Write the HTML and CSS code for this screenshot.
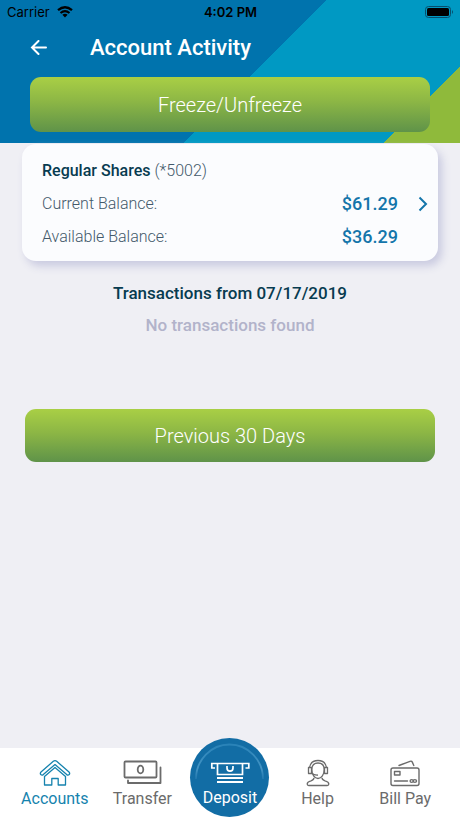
FILE: index.html
```html
<!DOCTYPE html>
<html lang="en">
<head>
<meta charset="utf-8">
<meta name="viewport" content="width=device-width, initial-scale=1">
<title>Account Activity</title>
<link rel="stylesheet" href="styles.css">
</head>
<body>
<header class="header">
  <div class="status">
    <span class="carrier">Carrier
      <svg width="16" height="12" viewBox="0 0 16 12" fill="none" stroke="#000" aria-hidden="true">
        <path d="M1 4.200Q8 -1.800 15 4.200" stroke-width="2.300"/>
        <path d="M3.500 7Q8 3.200 12.500 7" stroke-width="2.100"/>
        <path d="M5.400 8.800Q8 6.800 10.600 8.800L8 11.500Z" fill="#000" stroke="none"/>
      </svg>
    </span>
    <span class="time">4:02 PM</span>
    <svg class="battery" width="29" height="12" viewBox="0 0 29 12" aria-hidden="true">
      <rect x=".5" y=".5" width="25" height="11" rx="3" fill="none" stroke="#064e6c"/>
      <rect x="2" y="2" width="22" height="8" rx="1.500"/>
      <path d="M27 4q2 2 0 4z" fill="#064e6c"/>
    </svg>
  </div>
  <div class="titlebar">
    <a class="back" href="#" aria-label="Back">
      <svg width="18" height="16" viewBox="0 0 18 16" fill="none" stroke="#fff" stroke-width="2" stroke-linecap="round" aria-hidden="true"><path d="M16 7.500H2M8.500 1L2 7.500l6.500 6.500"/></svg>
    </a>
    <h1>Account Activity</h1>
  </div>
  <button class="action" type="button">Freeze/Unfreeze</button>
</header>
<main class="content">
  <a class="card" href="#">
    <span class="details">
      <span class="name"><strong>Regular Shares</strong> (*5002)</span>
      <span class="row"><span>Current Balance:</span><span class="amount">$61.29</span></span>
      <span class="row"><span>Available Balance:</span><span class="amount">$36.29</span></span>
    </span>
    <svg class="chevron" width="10" height="16" viewBox="0 0 10 16" fill="none" stroke="#1475aa" stroke-width="2" aria-hidden="true"><path d="M1.500 1.500L8 8l-6.500 6.500"/></svg>
  </a>
  <section class="transactions">
    <h2>Transactions from 07/17/2019</h2>
    <p>No transactions found</p>
  </section>
  <button class="action previous" type="button">Previous 30 Days</button>
</main>
<nav class="tabs" aria-label="Main">
  <a class="tab active" href="#">
    <svg width="32" height="28" viewBox="0 0 32 28" fill="none" stroke="currentColor" stroke-width="1.300" stroke-linejoin="round" aria-hidden="true">
      <path d="M14.300 2.300Q16 .9 17.700 2.300L30 13q1.200 1.300.2 2.500-1.100 1.100-2.500.1L16 5.600 4.300 15.600q-1.400 1-2.500-.1-1-1.200.2-2.500Z"/>
      <path d="M5.500 17.500V26h7.300v-6.500h6.400V26h7.300v-8.500L16 8.400Z"/>
    </svg>
    <span>Accounts</span>
  </a>
  <a class="tab" href="#">
    <svg width="40" height="28" viewBox="0 0 40 28" fill="none" stroke="currentColor" stroke-width="1.800" stroke-linejoin="round" stroke-linecap="round" aria-hidden="true">
      <rect x="2.500" y="2.500" width="32" height="16" rx="1"/>
      <ellipse cx="18.500" cy="10.500" rx="2.800" ry="3.800"/>
      <path d="M6 21.500V24h32.500V8.500"/>
    </svg>
    <span>Transfer</span>
  </a>
  <a class="tab deposit" href="#">
    <svg class="ring" width="69" height="37" viewBox="0 0 69 37" fill="none" stroke-width="1.800" aria-hidden="true">
      <defs><linearGradient id="fade" x2="0" y2="1"><stop stop-color="#2a83b8"/><stop offset=".7" stop-color="#4394c4"/><stop offset="1" stop-color="#2077ae"/></linearGradient></defs>
      <path stroke="url(#fade)" d="M1 36a33.500 34.500 0 0 1 67 0"/>
    </svg>
    <svg width="40" height="24" viewBox="0 0 40 24" fill="none" stroke="currentColor" stroke-width="1.700" aria-hidden="true">
      <path d="M5 6H1.800V1.500h37V6h-3.300M7.500 2v10.500h25V2"/>
      <path d="M17 4v2q0 3.200 3 3.200T23 6V4"/>
      <path stroke-width="2" d="M7 16h26M7 20h26"/>
    </svg>
    <span>Deposit</span>
  </a>
  <a class="tab" href="#">
    <svg width="24" height="28" viewBox="0 0 24 28" fill="none" stroke="currentColor" stroke-width="1.300" stroke-linejoin="round" aria-hidden="true">
      <path d="M5.800 10.500C5.800 6 8.300 4 12 4s6.200 2 6.200 6.500c0 5-2.700 9-6.200 9s-6.200-4-6.200-9Z"/>
      <path d="M3.500 8.500C4.300 4 7.500 1.500 12 1.500s7.700 2.500 8.500 7"/>
      <path d="M5.500 8.500h-3v6h3zM18.500 8.500h3v6h-3zM5.500 14q2.500 2.300 6.500 2"/>
      <path d="M8 18.800q0 2-3 3-3.800 1-3.800 3.200 0 1.500 1.500 1.500h18.600q1.500 0 1.500-1.500 0-2.200-3.800-3.200-3-1-3-3"/>
    </svg>
    <span>Help</span>
  </a>
  <a class="tab" href="#">
    <svg width="32" height="28" viewBox="0 0 32 28" fill="none" stroke="currentColor" stroke-width="1.400" stroke-linejoin="round" stroke-linecap="round" aria-hidden="true">
      <rect x="2" y="9" width="28" height="17.500" rx="2"/>
      <path d="M10 6.500L21 2.300q1.700-.6 2.300.8l1.500 3.400"/>
      <rect x="5.500" y="12.500" width="5.500" height="3.500"/>
      <path d="M5.500 22h13"/>
      <ellipse cx="22.700" cy="22" rx="1.600" ry="1.400"/><ellipse cx="25.900" cy="22" rx="1.600" ry="1.400"/>
    </svg>
    <span>Bill Pay</span>
  </a>
</nav>
</body>
</html>
```
FILE: styles.css
```css
* { box-sizing: border-box; }

body {
  margin: 0;
  min-height: 100vh;
  display: flex;
  flex-direction: column;
  background: #efeff4;
  color: #43596a;
  font-family: Roboto, sans-serif;
  font-size: 16px;
}

a { color: inherit; text-decoration: none; }
svg { display: block; flex: none; }
h1, h2, p { margin: 0; }

.header {
  padding-bottom: 11px;
  background: linear-gradient(135deg, #0073ad 54.2%, #0099c3 54.2% 87.3%, #8fba3b 87.3%);
}

.status {
  display: grid;
  grid-template-columns: 1fr auto 1fr;
  align-items: center;
  height: 24px;
  padding: 0 6px 0 7px;
  color: #000;
  font: 13px/24px Inter, sans-serif;
}
.carrier { display: flex; align-items: center; gap: 7px; }
.time { font-weight: 600; }
.battery { justify-self: end; }

.titlebar {
  display: flex;
  align-items: center;
  height: 53px;
  padding: 0 30px 6px;
  color: #fff;
}
.back { width: 60px; }
h1 { font-size: 22px; font-weight: 500; line-height: 28px; }

.action {
  display: block;
  width: calc(100% - 60px);
  height: 55px;
  margin: 0 30px;
  padding: 0;
  border: 0;
  border-radius: 11px;
  background: linear-gradient(#a9cf45, #8cb645 45%, #5f9349);
  color: #fff;
  font: 300 20px/28px Roboto, sans-serif;
}

.content { flex: 1; padding: 1px 22px 24px; }

.card {
  display: flex;
  align-items: center;
  gap: 20px;
  padding: 10px 10px 8px 20px;
  border-radius: 14px;
  background: #fbfcfe;
  box-shadow: 4px 5px 9px #c9cae0;
}
.details { flex: 1; }
.name, .row { display: flex; align-items: center; height: 33px; font-weight: 300; }
.name { gap: 4px; }
.name strong { color: #073b50; font-weight: 500; }
.row { justify-content: space-between; }
.amount { color: #1475aa; font-size: 18px; font-weight: 500; }

.transactions { padding-top: 16px; text-align: center; line-height: 32px; }
h2 { color: #073b50; font-size: 17px; font-weight: 500; }
.transactions p { color: #b2b3ca; font-size: 17px; font-weight: 500; }

.previous { width: calc(100% - 6px); height: 53px; margin: 68px 3px 0; }

.tabs {
  display: grid;
  grid-template-columns: repeat(5, 1fr);
  height: 70px;
  padding: 0 11px;
  background: #fff;
  color: #6b6b6b;
}
.tab {
  display: flex;
  flex-direction: column;
  align-items: center;
  gap: 2px;
  padding-top: 11px;
  line-height: 20px;
}
.active { color: #1683ae; }
.deposit {
  position: relative;
  justify-self: center;
  width: 79px;
  height: 79px;
  margin-top: -10px;
  padding-top: 24px;
  background: #126da5;
  border-radius: 50%;
  color: #fff;
}
.ring { position: absolute; top: 5px; left: 5px; }
```
